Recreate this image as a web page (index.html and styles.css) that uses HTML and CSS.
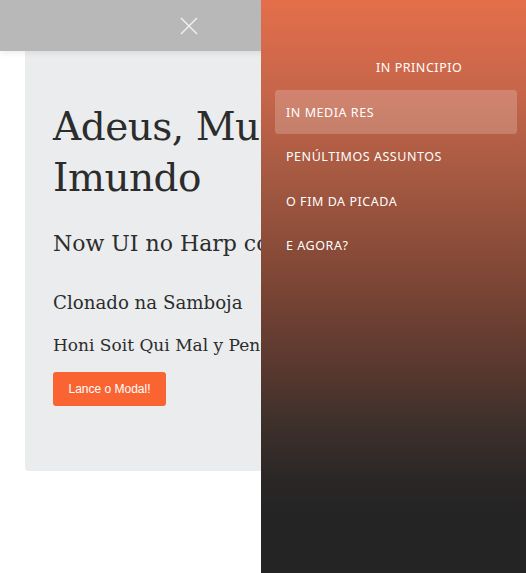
FILE: index.html
```html
<!DOCTYPE html>
<html lang="pt">
<head>
<meta charset="utf-8">
<title>Adeus, Mundo Imundo</title>
<link rel="stylesheet" href="styles.css">
</head>
<body>
<nav class="navbar">
  <button class="close-btn" aria-label="Fechar">
    <svg width="18" height="18" viewBox="0 0 18 18"><path d="M1 1L17 17M17 1L1 17" stroke="#f2f2f2" stroke-width="1.4" fill="none"/></svg>
  </button>
</nav>
<main class="page">
  <section class="card">
    <h1 class="title">Adeus, Mundo<br>Imundo</h1>
    <h2 class="subtitle">Now UI no Harp com Bootstrap</h2>
    <h3 class="line-a">Clonado na Samboja</h3>
    <h4 class="line-b">Honi Soit Qui Mal y Pense</h4>
    <button class="btn">Lance o Modal!</button>
  </section>
</main>
<aside class="sidebar">
  <ul class="menu">
    <li class="menu-item menu-first">IN PRINCIPIO</li>
    <li class="menu-item active">IN MEDIA RES</li>
    <li class="menu-item">PENÚLTIMOS ASSUNTOS</li>
    <li class="menu-item">O FIM DA PICADA</li>
    <li class="menu-item">E AGORA?</li>
  </ul>
</aside>
</body>
</html>
```
FILE: styles.css
```css
html, body {
  margin: 0;
  padding: 0;
  background: #ffffff;
  overflow: hidden;
  height: 573px;
}
.navbar {
  height: 51px;
  background: #b8b8b8;
  box-shadow: 0 2px 6px rgba(0,0,0,0.08);
  display: flex;
  align-items: center;
  padding-left: 180px;
  position: relative;
  z-index: 2;
}
.close-btn {
  background: none;
  border: 0;
  padding: 0;
  width: 18px;
  height: 18px;
  display: block;
}
.close-btn svg { display: block; }
.page {
  margin-left: 25px;
  width: 236px;
  overflow: hidden;
}
.card {
  background: #ebecee;
  border-radius: 0 0 0 4px;
  width: 236px;
  height: 420px;
  padding: 50px 0 0 28px;
  box-sizing: border-box;
  white-space: nowrap;
  overflow: hidden;
  color: #2c2c2c;
  font-family: "DejaVu Serif", serif;
}
.title {
  font-size: 39px;
  line-height: 51px;
  font-weight: 400;
  margin: 0;
  letter-spacing: -0.5px;
}
.subtitle {
  font-size: 22px;
  font-weight: 400;
  margin: 26px 0 0;
  line-height: 30px;
}
.line-a {
  font-size: 18.2px;
  font-weight: 400;
  margin: 31px 0 0;
  line-height: 26px;
}
.line-b {
  font-size: 17px;
  font-weight: 400;
  margin: 17px 0 0;
  line-height: 24px;
}
.btn {
  margin-top: 15px;
  width: 113px;
  height: 34px;
  border: 0;
  border-radius: 3px;
  background: #fa6432;
  color: #ffffff;
  font-family: "Liberation Sans", Arial, sans-serif;
  font-size: 12px;
  display: block;
}
.sidebar {
  position: fixed;
  top: 0;
  left: 261px;
  width: 265px;
  height: 573px;
  background: linear-gradient(#e46e4a 0%, #c4654a 17%, #a75a42 30%, #824836 47%, #5e3a30 62%, #3e302b 74%, #2a2626 84%, #242424 90%, #242424 100%);
  z-index: 5;
}
.menu {
  list-style: none;
  margin: 0;
  padding: 45px 9px 0 14px;
  font-family: "Noto Sans", sans-serif;
  font-size: 12.5px;
  color: #ffffff;
}
.menu-item {
  height: 44.5px;
  line-height: 45px;
  padding-left: 11px;
  border-radius: 3px;
  letter-spacing: 0.55px;
}
.menu-first {
  padding-left: 101px;
}
.menu-item.active {
  background: rgba(255,255,255,0.2);
}
```
